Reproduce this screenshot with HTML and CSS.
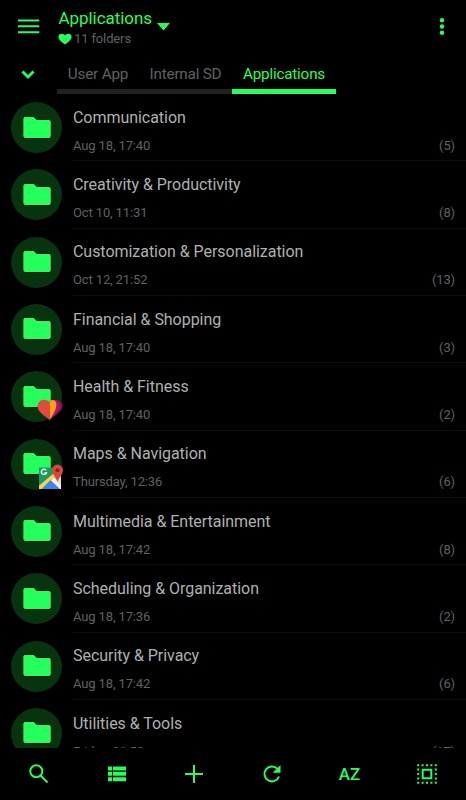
FILE: index.html
```html
<!DOCTYPE html>
<html lang="en">
<head>
  <meta charset="UTF-8">
  <title>Applications</title>
  <link rel="stylesheet" href="styles.css">
</head>
<body>
  <svg class="defs" width="0" height="0">
    <symbol id="folder" viewBox="0 0 32 26">
      <path d="M4.200 1.400h8.500l3.200 3.100h12a2.400 2.400 0 0 1 2.400 2.400v14.200a2.400 2.400 0 0 1-2.400 2.400H4.200a2.400 2.400 0 0 1-2.400-2.400V3.800a2.400 2.400 0 0 1 2.400-2.400z" fill="#24ff5c" stroke="#021006" stroke-width="1"/>
    </symbol>
  </svg>

  <div class="app">
    <header class="header">
      <svg class="menu" width="22" height="16" viewBox="0 0 22 16"><path d="M0 1.500h21.300M0 7.300h21.300M0 13.200h21.300"/></svg>
      <div class="heading">
        <h1>Applications</h1>
        <p><svg width="14" height="12" viewBox="0 0 14 12"><path d="M7 11.400C5.500 10.200.4 7.100.4 3.900.4 2 1.900.8 3.600.8 5 .8 6.300 1.600 7 2.600 7.700 1.600 9 .8 10.400.8c1.700 0 3.200 1.200 3.200 3.100C13.600 7.100 8.500 10.200 7 11.400z"/></svg><span>11 folders</span></p>
      </div>
      <svg class="arrow" width="13" height="8" viewBox="0 0 13 8"><path d="M0 0h13L6.500 7.600z"/></svg>
      <svg class="more" width="6" height="18" viewBox="0 0 6 18"><circle cx="3" cy="2.200" r="2.200"/><circle cx="3" cy="8.500" r="2.200"/><circle cx="3" cy="14.700" r="2.200"/></svg>
    </header>

    <nav class="tabs">
      <svg class="chevron" width="14" height="10" viewBox="0 0 14 10"><path d="M1.500 1.500L7 7l5.500-5.500"/></svg>
      <a class="tab tab-user">User App</a>
      <a class="tab tab-sd">Internal SD</a>
      <a class="tab tab-apps active">Applications</a>
    </nav>

    <main class="list">
      <div class="row">
        <div class="icon"><svg class="folder"><use href="#folder"/></svg></div>
        <div class="info"><h2>Communication</h2><p><span>Aug 18, 17:40</span><span>(5)</span></p></div>
      </div>
      <div class="row">
        <div class="icon"><svg class="folder"><use href="#folder"/></svg></div>
        <div class="info"><h2>Creativity &amp; Productivity</h2><p><span>Oct 10, 11:31</span><span>(8)</span></p></div>
      </div>
      <div class="row">
        <div class="icon"><svg class="folder"><use href="#folder"/></svg></div>
        <div class="info"><h2>Customization &amp; Personalization</h2><p><span>Oct 12, 21:52</span><span>(13)</span></p></div>
      </div>
      <div class="row">
        <div class="icon"><svg class="folder"><use href="#folder"/></svg></div>
        <div class="info"><h2>Financial &amp; Shopping</h2><p><span>Aug 18, 17:40</span><span>(3)</span></p></div>
      </div>
      <div class="row">
        <div class="icon">
          <svg class="folder"><use href="#folder"/></svg>
          <svg class="badge badge-fit" width="26" height="22" viewBox="0 0 26 22">
            <path d="M12.500 21V3C15 .5 19 0 22 1.500c3 1.500 4.200 5 2.800 8C23 13.500 17 17 12.500 21z" fill="#8a1457"/>
            <path d="M12.500 21V3C15 .5 18 .4 20 1.800c3 2 3.300 5 2 8C20.200 13.500 16 17.500 12.500 21z" fill="#b3126b"/>
            <path d="M12.500 21V3C14 1 16 .6 17.500 1.600c2.300 1.600 2.300 5.500 1.100 8.500C17.300 13.700 15 17.500 12.500 21z" fill="#ff9d13"/>
            <path d="M12.700 21V3.200C10.700.6 6.500-.2 3.400 1.800.2 4-.3 8 1.500 11c2.400 4 7.300 6.500 11.200 10z" fill="#e04b3e"/>
          </svg>
        </div>
        <div class="info"><h2>Health &amp; Fitness</h2><p><span>Aug 18, 17:40</span><span>(2)</span></p></div>
      </div>
      <div class="row">
        <div class="icon">
          <svg class="folder"><use href="#folder"/></svg>
          <svg class="badge badge-maps" width="25" height="26" viewBox="0 0 25 26">
            <path d="M0 3.500h22V25H0z" fill="#199b60"/>
            <path d="M14 14l8-2v13z" fill="#d9d9d9"/>
            <path d="M0 25V22L12 12l3 1 7 9v3z" fill="#f3f3f3"/>
            <path d="M0 22L14.500 9.500l2 3L3 25H0z" fill="#ffd04a"/>
            <path d="M2.500 25L11.500 16 21 25z" fill="#3f84ec"/>
            <path d="M7.300 6.400A2.700 2.700 0 1 0 7.500 9H5.300" fill="none" stroke="#fff" stroke-width="1.300"/>
            <path d="M18.500 19C18.200 14 13 11 13 6.100a5.500 5.500 0 0 1 11 0C24 11 18.800 14 18.500 19z" fill="#df4638"/>
            <circle cx="18.500" cy="6.200" r="2" fill="#7d2722"/>
          </svg>
        </div>
        <div class="info"><h2>Maps &amp; Navigation</h2><p><span>Thursday, 12:36</span><span>(6)</span></p></div>
      </div>
      <div class="row">
        <div class="icon"><svg class="folder"><use href="#folder"/></svg></div>
        <div class="info"><h2>Multimedia &amp; Entertainment</h2><p><span>Aug 18, 17:42</span><span>(8)</span></p></div>
      </div>
      <div class="row">
        <div class="icon"><svg class="folder"><use href="#folder"/></svg></div>
        <div class="info"><h2>Scheduling &amp; Organization</h2><p><span>Aug 18, 17:36</span><span>(2)</span></p></div>
      </div>
      <div class="row">
        <div class="icon"><svg class="folder"><use href="#folder"/></svg></div>
        <div class="info"><h2>Security &amp; Privacy</h2><p><span>Aug 18, 17:42</span><span>(6)</span></p></div>
      </div>
      <div class="row">
        <div class="icon"><svg class="folder"><use href="#folder"/></svg></div>
        <div class="info"><h2>Utilities &amp; Tools</h2><p><span>Friday, 21:52</span><span>(17)</span></p></div>
      </div>
    </main>

    <footer class="toolbar">
      <div class="tool"><svg width="20" height="20" viewBox="0 0 20 20"><g class="line"><circle cx="7.300" cy="7.200" r="6"/><path d="M11.500 11.500l7 7"/></g></svg></div>
      <div class="tool"><svg width="18" height="16" viewBox="0 0 18 16"><path d="M0 .5h4v4H0zM5 .5h13v4H5zM0 5.800h4v4H0zM5 5.800h13v4H5zM0 11.200h4v4H0zM5 11.200h13v4H5z"/></svg></div>
      <div class="tool"><svg width="18" height="18" viewBox="0 0 18 18"><path class="line" d="M9 0v18M0 9h18"/></svg></div>
      <div class="tool"><svg width="20" height="20" viewBox="0 0 20 20"><path class="line" d="M15.300 4.600A7.500 7.500 0 1 0 17 12.500"/><path d="M18.500 1v7.800h-7.800z"/></svg></div>
      <div class="tool sort">AZ</div>
      <div class="tool"><svg width="20" height="20" viewBox="0 0 20 20"><path class="dots" d="M.200 1.200h19.600M.200 18.800h19.600M1.200.200v19.600M18.800.200v19.600"/><path class="line" d="M5.700 5.700h8.600v8.600H5.700z"/></svg></div>
    </footer>
  </div>
</body>
</html>
```
FILE: styles.css
```css
body {
  margin: 0;
  background-color: #000;
  font-family: Roboto, sans-serif;
}
h1, h2, p {
  margin: 0;
  font-weight: 400;
}
svg {
  display: block;
  flex: none;
  fill: #24ff5c;
}
.defs {
  position: absolute;
}
.app {
  display: flex;
  flex-direction: column;
  height: 800px;
  overflow: hidden;
}
.header {
  display: flex;
  align-items: flex-start;
  height: 54px;
  flex: none;
}
.menu {
  margin: 19px 18px 0;
  stroke: #24ff5c;
  stroke-width: 2;
}
.heading {
  padding-top: 8px;
}
.heading h1 {
  padding-left: 0.5px;
  color: #24ff5c;
  font-size: 17px;
  letter-spacing: -0.05px;
  line-height: 21px;
}
.heading p {
  display: flex;
  align-items: center;
  gap: 2px;
  color: #616161;
  font-size: 13px;
  letter-spacing: -0.13px;
  line-height: 19px;
}
.arrow {
  margin: 23px 0 0 5px;
}
.more {
  margin: 18px 21px 0 auto;
}
.tabs {
  display: flex;
  height: 40px;
  flex: none;
}
.chevron {
  margin: 16px 22px 0 21px;
  fill: none;
  stroke: #24ff5c;
  stroke-width: 3;
}
.tab {
  box-sizing: border-box;
  height: 40px;
  border-bottom: 5px solid #212121;
  color: #616161;
  font-size: 15.3px;
  letter-spacing: -0.22px;
  line-height: 40px;
  text-align: center;
}
.tab-user {
  width: 82px;
}
.tab-sd {
  width: 93px;
}
.tab-apps {
  width: 104px;
}
.active {
  border-color: #24ff5c;
  color: #24ff5c;
}
.list {
  flex: 1;
  min-height: 0;
  overflow: hidden;
}
.row {
  display: flex;
  height: 67.33px;
}
.icon {
  position: relative;
  display: flex;
  flex: none;
  align-items: center;
  justify-content: center;
  width: 51px;
  height: 51px;
  margin: 8px 11px 0;
  border-radius: 50%;
  background-color: #07330f;
}
.folder {
  width: 32px;
  height: 26px;
}
.badge {
  position: absolute;
}
.badge-fit {
  left: 26px;
  top: 28px;
}
.badge-maps {
  left: 28px;
  top: 25px;
}
.info {
  flex: 1;
  box-sizing: border-box;
  padding: 13.7px 11px 0 0;
  border-bottom: 1px solid #0d0d0d;
}
.info h2 {
  color: #b0b0b0;
  font-size: 16px;
  letter-spacing: -0.04px;
  line-height: 20px;
}
.info p {
  display: flex;
  justify-content: space-between;
  padding-top: 8px;
  color: #616161;
  font-size: 13px;
  letter-spacing: -0.13px;
  line-height: 20px;
}
.toolbar {
  display: flex;
  height: 52.5px;
  flex: none;
}
.tool {
  display: flex;
  flex: 1;
  align-items: center;
  justify-content: center;
}
.sort {
  color: #24ff5c;
  font-size: 17px;
  font-weight: 500;
}
.line {
  fill: none;
  stroke: #24ff5c;
  stroke-width: 2;
}
.dots {
  fill: none;
  stroke: #24ff5c;
  stroke-width: 2;
  stroke-dasharray: 2 2.400;
}
```
